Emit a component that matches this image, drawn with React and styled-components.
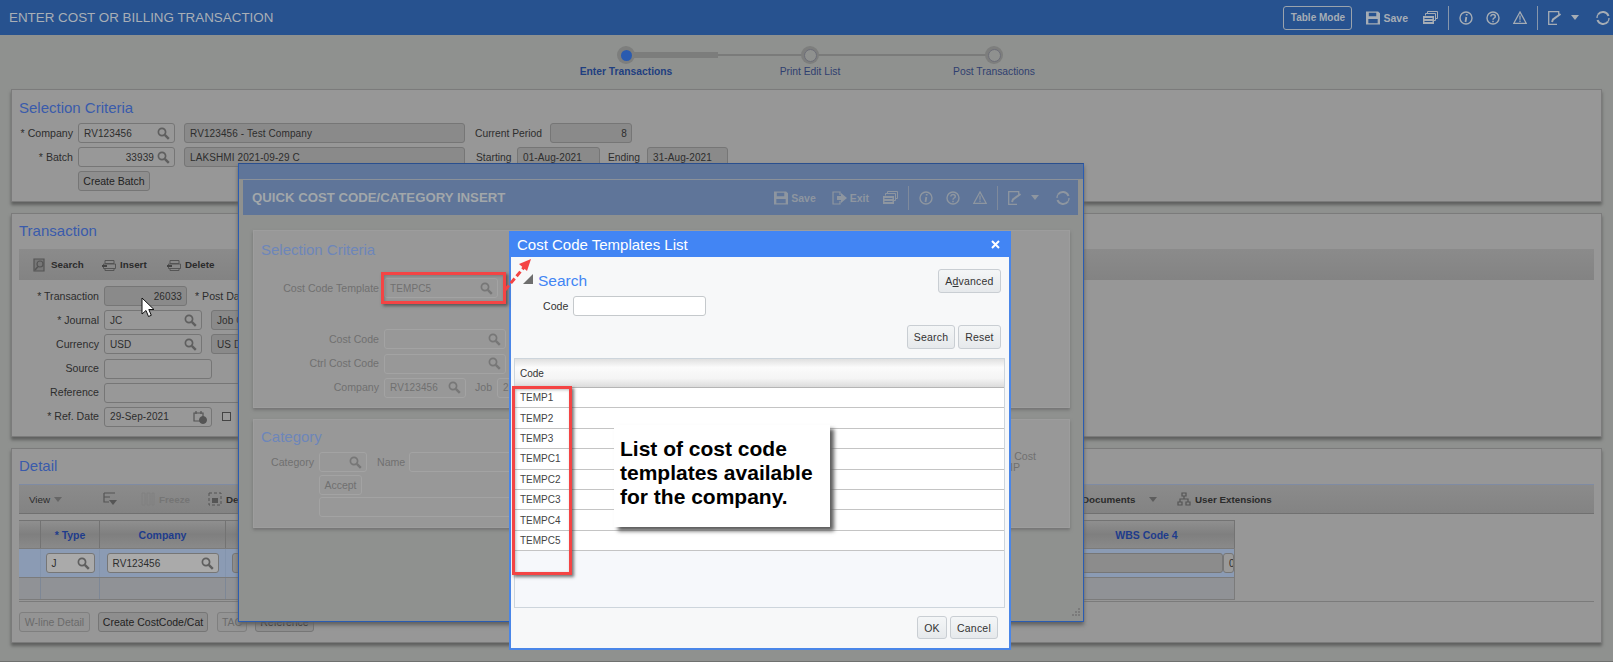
import styled, { createGlobalStyle } from 'styled-components';

const GlobalStyle = createGlobalStyle`
  html, body {
    margin: 0;
    padding: 0;
    background: #8f918f;
    font-family: "Liberation Sans", Arial, sans-serif;
  }
  * { box-sizing: border-box; }
`;

/* icons */
const SearchIcon = ({ color = '#666', size = 13 }) => (
  <svg width={size} height={size} viewBox="0 0 13 13" fill="none" stroke={color}>
    <circle cx="5" cy="5" r="3.6" strokeWidth="1.7" />
    <path d="M7.8 7.8l4 4" strokeWidth="2.4" />
  </svg>
);
const FloppyIcon = ({ color }) => (
  <svg width="14" height="14" viewBox="0 0 15 14" fill={color}>
    <path d="M0 0h13l2 2v12H0z M3 1.5v3.5h8V1.5z M2.5 8v4.5h10V8z" fillRule="evenodd" />
  </svg>
);
const CopyIcon = ({ color }) => (
  <svg width="15" height="13" viewBox="0 0 15 13" fill="none" stroke={color}>
    <path d="M4.500 2.500V.5h10v7h-2" strokeWidth="1" />
    <path d="M2.500 4.500V2.500h10v7h-2" strokeWidth="1" />
    <path d="M0 5h11v8H0z M1.500 7v1h8V7z M1.500 10v1h8v-1z" fill={color} stroke="none" fillRule="evenodd" />
  </svg>
);
const InfoIcon = ({ color }) => (
  <svg width="14" height="14" viewBox="0 0 14 14" fill="none" stroke={color}>
    <circle cx="7" cy="7" r="6" strokeWidth="1.4" />
    <path d="M7.700 3v1.500M7.300 6L6.500 11" strokeWidth="1.800" />
  </svg>
);
const HelpIcon = ({ color }) => (
  <svg width="14" height="14" viewBox="0 0 14 14" fill="none" stroke={color}>
    <circle cx="7" cy="7" r="6" strokeWidth="1.4" />
    <path d="M4.800 5.500C4.800 2.800 9.300 3 9.300 5.400 9.300 7 7 7 7 8.700M7 9.700v1.500" strokeWidth="1.500" />
  </svg>
);
const WarnIcon = ({ color }) => (
  <svg width="14" height="13" viewBox="0 0 14 13" fill="none" stroke={color}>
    <path d="M7 1L.8 12.300h12.400z" strokeWidth="1.300" />
    <path d="M7 4.500v4.300M7 9.500v1.500" strokeWidth="1.200" />
  </svg>
);
const NoteIcon = ({ color }) => (
  <svg width="14" height="14" viewBox="0 0 14 14" fill="none" stroke={color}>
    <path d="M9 13.300H.7V.7h10v3" strokeWidth="1.300" />
    <path d="M4 11l1-2.500L12.500 3" strokeWidth="2" />
  </svg>
);
const RefreshIcon = ({ color }) => (
  <svg width="14" height="14" viewBox="0 0 14 14" fill="none" stroke={color}>
    <path d="M12.500 5A6 6 0 0 0 2 3.500M1.500 9A6 6 0 0 0 12 10.500" strokeWidth="2" />
    <path d="M1 7a6 6 0 0 1 1-3.500M13 7a6 6 0 0 1-1 3.500" strokeWidth="1.300" />
  </svg>
);
const ExitIcon = ({ color }) => (
  <svg width="15" height="14" viewBox="0 0 15 14" fill="none" stroke={color}>
    <path d="M8 4V1H1v12h7v-3" strokeWidth="1.200" />
    <path d="M5 5h4V2l6 5-6 5V9H5z" fill={color} stroke="none" />
  </svg>
);
const ToolGlyph = ({ kind }) => (
  <svg width="14" height="14" viewBox="0 0 14 14" fill="none" stroke="#555">
    {kind === 'search' && (
      <>
        <path d="M1 1h10v12H1z" strokeWidth="1.200" fill="#777" />
        <circle cx="7" cy="6" r="3" strokeWidth="1.200" />
        <path d="M5 8.500L2 12" strokeWidth="1.500" />
      </>
    )}
    {kind === 'row' && (
      <>
        <path d="M3 2.500h9v3H3zM1.500 6h12v4.500h-12zM3 10.500h9v2H3z" strokeWidth="1" fill="#888" />
        <path d="M0 8h5" strokeWidth="2" stroke="#444" />
      </>
    )}
    {kind === 'filter' && (
      <>
        <path d="M1 1h11M1 1v9h5M1 5h6" strokeWidth="1.200" />
        <path d="M6 8h8l-4 5z" fill="#555" stroke="none" />
      </>
    )}
    {kind === 'freeze' && <path d="M1 1h3v12H1zM6 1h3v12H6zM11 1h2v12h-2z" stroke="#808080" />}
    {kind === 'density' && (
      <>
        <path d="M1 1h12v12H1z" strokeWidth="1" strokeDasharray="3 2" />
        <path d="M4 6h6v5H4z" fill="#555" stroke="none" />
      </>
    )}
    {kind === 'tree' && (
      <path d="M5 1h4v3H5zM1 10h4v3H1zM9 10h4v3H9zM7 4v3M3 10V7h8v3" strokeWidth="1.200" />
    )}
  </svg>
);

/* page */
const Page = styled.div`
  position: relative;
  width: 1613px;
  height: 662px;
  overflow: hidden;
  background: #8f918f;
  color: #2d2d2d;
  font-size: 11px;
  border-bottom: 1px solid #6f716f;
`;

const TopBar = styled.header`
  height: 35px;
  background: #27528f;
  display: flex;
  align-items: center;
  padding: 0 3px 0 9px;
  color: #a6adb5;
`;

const AppTitle = styled.h1`
  margin: 0 auto 0 0;
  font-size: 13.4px;
  font-weight: 400;
  color: #a9afb6;
`;

const TableMode = styled.button`
  width: 69px;
  height: 24px;
  margin-right: 14px;
  padding: 0;
  background: transparent;
  border: 1px solid #9aa3ad;
  border-radius: 3px;
  color: #a6adb5;
  font: 700 10px "Liberation Sans", Arial, sans-serif;
`;

const BarAction = styled.span`
  display: inline-flex;
  align-items: center;
  gap: 3px;
  margin-right: ${(p) => p.$mr ?? 14}px;
  margin-left: ${(p) => p.$ml ?? 0}px;
  font-size: 10.5px;
  font-weight: 700;
  color: ${(p) => p.$color};
`;

const BarDivider = styled.i`
  width: 1px;
  height: 24px;
  margin: 0 10px;
  background: ${(p) => p.$color};
`;

const Caret = styled.i`
  display: inline-block;
  width: 0;
  height: 0;
  border-left: 4px solid transparent;
  border-right: 4px solid transparent;
  border-top: 5px solid ${(p) => p.$color};
`;

const Stepper = styled.nav`
  height: 54px;
  display: flex;
  padding: 11px 0 0 534px;
`;

const Step = styled.div`
  position: relative;
  width: 184px;
  display: flex;
  flex-direction: column;
  align-items: center;
  gap: 2px;
  &::before {
    content: '';
    display: ${(p) => (p.$last ? 'none' : 'block')};
    position: absolute;
    left: 50%;
    top: 8px;
    width: 100%;
    height: 2px;
    background: #7a7b7a;
  }
  &::after {
    content: '';
    display: ${(p) => (p.$active ? 'block' : 'none')};
    position: absolute;
    left: 50%;
    top: 6px;
    width: 50%;
    height: 6px;
    background: #7c7d7c;
  }
`;

const StepDot = styled.span`
  position: relative;
  z-index: 1;
  width: 18px;
  height: 18px;
  border-radius: 50%;
  background: #7d7e7d;
  display: flex;
  align-items: center;
  justify-content: center;
  &::after {
    content: '';
    width: 11px;
    height: 11px;
    border-radius: 50%;
    background: ${(p) => (p.$active ? '#2a5bb0' : '#8f918f')};
    border: ${(p) => (p.$active ? 'none' : '1px solid #6d6e78')};
  }
`;

const StepLabel = styled.span`
  font-size: 10.3px;
  font-weight: ${(p) => (p.$active ? 700 : 400)};
  color: ${(p) => (p.$active ? '#1f3f80' : '#2f3f70')};
`;

const Panel = styled.section`
  margin: 0 11px 11px;
  height: ${(p) => p.$h}px;
  padding: ${(p) => p.$pt ?? 8}px 7px 0;
  background: #979797;
  border: 1px solid #7b7b7b;
  box-shadow: 0 3px 3px #5f605f;
  display: flex;
  flex-direction: column;
`;

const PanelTitle = styled.h2`
  margin: 0 0 ${(p) => p.$mb ?? 5}px 0;
  font-size: 15px;
  line-height: 20px;
  font-weight: 400;
  color: ${(p) => p.$color ?? '#3a5bab'};
`;

const Rows = styled.div`
  display: flex;
  flex-direction: column;
  gap: ${(p) => p.$gap ?? 4.2}px;
`;

const Row = styled.div`
  height: ${(p) => p.$h ?? 20}px;
  display: flex;
  align-items: center;
`;

const Label = styled.label`
  width: ${(p) => p.$w + 1}px;
  margin-left: ${(p) => p.$ml ?? 0}px;
  margin-right: 5px;
  text-align: ${(p) => (p.$left ? 'left' : 'right')};
  flex: none;
  white-space: nowrap;
  font-size: ${(p) => p.$fs ?? 10.6}px;
  line-height: 11px;
  color: ${(p) => p.$color ?? '#2d2d2d'};
`;

const Field = styled.div`
  width: ${(p) => p.$w}px;
  height: ${(p) => p.$h ?? 20}px;
  margin-left: ${(p) => p.$ml ?? 0}px;
  flex: none;
  display: flex;
  align-items: center;
  justify-content: ${(p) => (p.$right ? 'flex-end' : 'space-between')};
  gap: 3px;
  padding: 0 4px 0 5px;
  border: 1px solid ${(p) => p.$line ?? '#767676'};
  border-radius: 3px;
  overflow: hidden;
  white-space: nowrap;
  font-size: 10px;
  letter-spacing: 0.1px;
  color: ${(p) => p.$color ?? '#2d2d2d'};
  background: ${(p) => p.$bg ?? '#989898'};
`;

const Button = styled.button`
  height: ${(p) => p.$h ?? 20}px;
  width: ${(p) => p.$w}px;
  margin-left: ${(p) => p.$ml ?? 0}px;
  flex: none;
  padding: 0;
  border: 1px solid ${(p) => p.$line ?? '#767676'};
  border-radius: 3px;
  background: ${(p) => p.$bg ?? '#8e8e8e'};
  color: ${(p) => p.$color ?? '#222'};
  font: 10.5px "Liberation Sans", Arial, sans-serif;
`;

const Toolbar = styled.div`
  height: ${(p) => p.$h ?? 31}px;
  margin: 0 0 6px;
  padding-left: ${(p) => p.$pl ?? 14}px;
  display: flex;
  align-items: center;
  flex: none;
  background: linear-gradient(#8b8b8b, #838383);
  border-top: ${(p) => (p.$edge ? '1px solid #7f8ba3' : 'none')};
  border-bottom: ${(p) => (p.$edge ? '1px solid #707070' : 'none')};
`;

const Tool = styled.span`
  width: ${(p) => p.$w}px;
  margin-left: ${(p) => p.$ml ?? 0}px;
  flex: none;
  display: inline-flex;
  align-items: center;
  gap: 4px;
  white-space: nowrap;
  font-size: 9.8px;
  font-weight: ${(p) => (p.$plain ? 400 : 700)};
  color: ${(p) => (p.$muted ? '#757575' : '#2b2b2b')};
`;

const Checkbox = styled.span`
  width: 9px;
  height: 9px;
  margin-left: 10px;
  border: 1px solid #444;
  background: #9a9a9a;
`;

/* detail grid */
const GridRow = styled.div`
  width: 1216px;
  height: ${(p) => p.$h}px;
  display: grid;
  grid-template-columns: 22px 59px 126px 833px 176px;
  background: ${(p) => p.$bg ?? 'transparent'};
  border-bottom: 1px solid #7b7b7b;
`;

const HeadCell = styled.div`
  display: flex;
  align-items: center;
  justify-content: center;
  border-right: 1px solid #737373;
  border-top: 1px solid #737373;
  background: linear-gradient(#8f8f8f, #7f7f7f 50%, #8a8a8a);
  font-size: 10.5px;
  font-weight: 700;
  color: #1e3c8c;
`;

const Cell = styled.div`
  display: flex;
  align-items: center;
  justify-content: ${(p) => (p.$end ? 'flex-end' : 'center')};
  overflow: hidden;
  border-right: 1px solid ${(p) => p.$line ?? '#8394ad'};
`;

const DetailActions = styled.div`
  display: flex;
  align-items: center;
  margin-top: 1px;
  padding-top: 10px;
  border-top: 1px solid #7b7b7b;
`;

/* floating windows */
const QuickModal = styled.div`
  position: absolute;
  left: 238px;
  top: 163px;
  width: 846px;
  height: 459px;
  padding-top: 15px;
  background: #8f918f;
  border: 1px solid #2a5cb2;
  border-top-color: #2a4f8e;
  box-shadow: 0 3px 4px #606060;
  display: flex;
  flex-direction: column;
  background-image: linear-gradient(#5f7599 15px, transparent 15px);
`;

const QuickHeader = styled.div`
  height: 36px;
  margin: 0 5px 0 4px;
  padding: 0 8px 0 9px;
  display: flex;
  align-items: center;
  flex: none;
  background: #5f7599;
  border-top: 1px solid #8b9199;
  color: #8e96a0;
`;

const QuickTitle = styled.h3`
  margin: 0 auto 0 0;
  font-size: 13.2px;
  font-weight: 700;
  color: #a2a7aa;
`;

const QuickPanel = styled.section`
  margin: ${(p) => p.$mt}px 13px 0 14px;
  height: ${(p) => p.$h}px;
  padding: ${(p) => p.$pt ?? 9}px 7px 0;
  background: #989898;
  border: 1px solid #9d9d9d;
  box-shadow: 0 2px 3px #737373;
  flex: none;
`;

const Grip = styled.svg`
  position: absolute;
  right: 3px;
  bottom: 3px;
`;

const ListModal = styled.div`
  position: absolute;
  left: 509px;
  top: 231px;
  width: 502px;
  height: 419px;
  background: #f7f8f9;
  border: 1px solid #4a86e8;
  border-width: 0 2px 2px;
  display: flex;
  flex-direction: column;
`;

const ListHeader = styled.div`
  height: 26px;
  margin: 0 -2px;
  padding: 0 11px 0 8px;
  flex: none;
  display: flex;
  align-items: center;
  justify-content: space-between;
  background: #4285f4;
  color: #fff;
  font-size: 15px;
`;

const SearchBar = styled.div`
  height: 39px;
  padding: 12px 8px 0 12px;
  display: flex;
  align-items: flex-start;
  flex: none;
`;

const Triangle = styled.i`
  width: 0;
  height: 0;
  margin: 5px 5px 0 0;
  border-bottom: 10px solid #6e6e6e;
  border-left: 10px solid transparent;
`;

const SearchTitle = styled.span`
  margin: 0 auto 0 0;
  font-size: 15.5px;
  line-height: 23px;
  color: #4285f4;
`;

const LightButton = styled.button`
  width: ${(p) => p.$w}px;
  height: ${(p) => p.$h ?? 24}px;
  padding: 0;
  flex: none;
  background: linear-gradient(#f4f6f7, #e6e9ec);
  border: 1px solid #c9ced3;
  border-radius: 3px;
  color: #333;
  font: 10.5px "Liberation Sans", Arial, sans-serif;
  letter-spacing: 0.2px;
  u { text-decoration: underline; }
`;

const CodeRow = styled.div`
  height: 20px;
  padding-left: 32px;
  display: flex;
  align-items: center;
  gap: 5px;
  color: #333;
  font-size: 10.6px;
  flex: none;
`;

const CodeInput = styled.input`
  width: 133px;
  height: 20px;
  background: #fff;
  border: 1px solid #c5c9cc;
  border-radius: 3px;
`;

const ListActions = styled.div`
  margin-top: ${(p) => p.$mt}px;
  padding-right: ${(p) => p.$pr}px;
  display: flex;
  justify-content: flex-end;
  gap: 3px;
  flex: none;
`;

const ListTable = styled.div`
  margin: 9px 4px 0 3px;
  height: 250px;
  background: #f6f8fb;
  border: 1px solid #cdd5dc;
  flex: none;
`;

const ListHead = styled.div`
  height: 29px;
  padding-left: 5px;
  display: flex;
  align-items: center;
  background: linear-gradient(#e0e0e0, #fbfbfb 30%, #f4f4f4 70%, #dcdcdc);
  border-bottom: 1px solid #b5b5b5;
  font-size: 10px;
  color: #333;
`;

const ListRow = styled.div`
  height: 20.400px;
  padding-left: 5px;
  display: flex;
  align-items: center;
  background: #fff;
  border-bottom: 1px solid #c4c4c4;
  font-size: 10px;
  color: #444;
`;

const Callout = styled.div`
  position: absolute;
  left: 614px;
  top: 425px;
  width: 216px;
  height: 102px;
  padding: 12px 0 0 6px;
  background: #fff;
  box-shadow: 4px 4px 4px #5d5d5d;
  font-size: 21px;
  font-weight: 700;
  line-height: 24px;
  white-space: nowrap;
  color: #000;
`;

const RedBox = styled.div`
  position: absolute;
  left: ${(p) => p.$x}px;
  top: ${(p) => p.$y}px;
  width: ${(p) => p.$w}px;
  height: ${(p) => p.$h}px;
  border: 3px solid #f44444;
  box-shadow: 2px 2px 3px rgba(60, 60, 60, 0.7), inset 1px 1px 3px rgba(60, 60, 60, 0.35);
`;

const Overlay = styled.svg`
  position: absolute;
  left: ${(p) => p.$x}px;
  top: ${(p) => p.$y}px;
`;

const Mag = () => <SearchIcon color="#5f5f5f" />;
const FadedMag = () => <SearchIcon color="#777" />;
const LIGHT_TEXT = '#707070';
const FADED_LINE = '#a3a3a3';

const BarIcons = ({ color, line }) => (
  <>
    <BarDivider $color={line} />
    <BarAction $color={color} $mr={13}><InfoIcon color={color} /></BarAction>
    <BarAction $color={color} $mr={13}><HelpIcon color={color} /></BarAction>
    <BarAction $color={color} $mr={0}><WarnIcon color={color} /></BarAction>
    <BarDivider $color={line} />
    <BarAction $color={color} $mr={9}><NoteIcon color={color} /></BarAction>
    <Caret $color={color} />
    <BarAction $color={color} $mr={0} $ml={17}><RefreshIcon color={color} /></BarAction>
  </>
);

const TEMPLATES = ['TEMP1', 'TEMP2', 'TEMP3', 'TEMPC1', 'TEMPC2', 'TEMPC3', 'TEMPC4', 'TEMPC5'];

export default function App() {
  return (
    <Page>
      <GlobalStyle />
      <TopBar>
        <AppTitle>ENTER COST OR BILLING TRANSACTION</AppTitle>
        <TableMode>Table Mode</TableMode>
        <BarAction $color="#a6adb5" $mr={15}><FloppyIcon color="#a6adb5" />Save</BarAction>
        <BarAction $color="#a6adb5" $mr={0}><CopyIcon color="#a6adb5" /></BarAction>
        <BarIcons color="#a6adb5" line="#8796ab" />
      </TopBar>

      <Stepper>
        <Step $active>
          <StepDot $active />
          <StepLabel $active>Enter Transactions</StepLabel>
        </Step>
        <Step>
          <StepDot />
          <StepLabel>Print Edit List</StepLabel>
        </Step>
        <Step $last>
          <StepDot />
          <StepLabel>Post Transactions</StepLabel>
        </Step>
      </Stepper>

      <Panel $h={113}>
        <PanelTitle>Selection Criteria</PanelTitle>
        <Rows>
          <Row>
            <Label $w={53}>* Company</Label>
            <Field $w={97}>RV123456<Mag /></Field>
            <Field $w={281} $ml={9} $bg="#8a8a8a">RV123456 - Test Company</Field>
            <Label $w={69} $ml={10} $left $fs={10.3}>Current Period</Label>
            <Field $w={82} $right $bg="#8a8a8a">8</Field>
          </Row>
          <Row>
            <Label $w={53}>* Batch</Label>
            <Field $w={97} $right>33939<Mag /></Field>
            <Field $w={281} $ml={9} $bg="#8a8a8a">LAKSHMI 2021-09-29 C</Field>
            <Label $w={35} $ml={11} $left $fs={10.3}>Starting</Label>
            <Field $w={83} $bg="#8a8a8a">01-Aug-2021</Field>
            <Label $w={33} $ml={8} $left $fs={10.3}>Ending</Label>
            <Field $w={81} $bg="#8a8a8a">31-Aug-2021</Field>
          </Row>
          <Row>
            <Button $w={72} $ml={59}>Create Batch</Button>
          </Row>
        </Rows>
      </Panel>

      <Panel $h={224} $pt={7}>
        <PanelTitle $mb={8}>Transaction</PanelTitle>
        <Toolbar>
          <Tool $w={69}><ToolGlyph kind="search" />Search</Tool>
          <Tool $w={65}><ToolGlyph kind="row" />Insert</Tool>
          <Tool $w={60}><ToolGlyph kind="row" />Delete</Tool>
        </Toolbar>
        <Rows>
          <Row>
            <Label $w={79}>* Transaction</Label>
            <Field $w={83} $right $bg="#8a8a8a">26033</Field>
            <Label $w={60} $ml={8} $left>* Post Date</Label>
          </Row>
          <Row>
            <Label $w={79}>* Journal</Label>
            <Field $w={98}>JC<Mag /></Field>
            <Field $w={90} $ml={9} $bg="#8a8a8a">Job Cost</Field>
          </Row>
          <Row>
            <Label $w={79}>Currency</Label>
            <Field $w={98}>USD<Mag /></Field>
            <Field $w={90} $ml={9} $bg="#8a8a8a">US Dollar</Field>
          </Row>
          <Row>
            <Label $w={79}>Source</Label>
            <Field $w={108} />
          </Row>
          <Row>
            <Label $w={79}>Reference</Label>
            <Field $w={200} />
          </Row>
          <Row>
            <Label $w={79}>* Ref. Date</Label>
            <Field $w={108}>
              29-Sep-2021
              <svg width="14" height="14" viewBox="0 0 14 14" fill="none" stroke="#555">
                <path d="M1 3h9v8H1zM3 1v3M8 1v3" strokeWidth="1.200" />
                <circle cx="10" cy="10" r="3.500" fill="#555" />
              </svg>
            </Field>
            <Checkbox />
          </Row>
        </Rows>
      </Panel>

      <Panel $h={195} $pt={7}>
        <PanelTitle $mb={8}>Detail</PanelTitle>
        <Toolbar $pl={10} $edge $h={30}>
          <Tool $w={74} $plain>View <Caret $color="#666" /></Tool>
          <Tool $w={38}><ToolGlyph kind="filter" /></Tool>
          <Tool $w={67} $muted><ToolGlyph kind="freeze" />Freeze</Tool>
          <Tool $w={60}><ToolGlyph kind="density" />Density</Tool>
          <Tool $w={67} $ml={814}>Documents</Tool>
          <Tool $w={28}><Caret $color="#5d5d5d" /></Tool>
          <Tool $w={100}><ToolGlyph kind="tree" />User Extensions</Tool>
        </Toolbar>
        <GridRow $h={29}>
          <HeadCell />
          <HeadCell>* Type</HeadCell>
          <HeadCell>Company</HeadCell>
          <HeadCell>Job</HeadCell>
          <HeadCell>WBS Code 4</HeadCell>
        </GridRow>
        <GridRow $h={29} $bg="#8b9bb4">
          <Cell />
          <Cell><Field $w={49} $bg="#aaaaaa">J<Mag /></Field></Cell>
          <Cell><Field $w={112} $bg="#aaaaaa">RV123456<Mag /></Field></Cell>
          <Cell $end><Field $w={826} $bg="#8e8e8e">2</Field></Cell>
          <Cell $end $line="#7b7b7b">
            <Field $w={170} $bg="#8c8c8c" />
            <Field $w={6} $bg="#9a9a9a">0</Field>
          </Cell>
        </GridRow>
        <GridRow $h={22} $bg="#909296">
          <Cell $line="#7d8796" />
          <Cell $line="#7d8796" />
          <Cell $line="#7d8796" />
          <Cell $line="#7d8796" />
          <Cell $line="#7b7b7b" />
        </GridRow>
        <DetailActions>
          <Button $w={71} $bg="#949494" $color="#6b6b6b" $line="#7f7f7f">W-line Detail</Button>
          <Button $w={110} $ml={8}>Create CostCode/Cat</Button>
          <Button $w={30} $ml={9} $bg="#949494" $color="#6b6b6b" $line="#7f7f7f">TAC</Button>
          <Button $w={59} $ml={8}>Reference</Button>
        </DetailActions>
      </Panel>

      <QuickModal>
        <QuickHeader>
          <QuickTitle>QUICK COST CODE/CATEGORY INSERT</QuickTitle>
          <BarAction $color="#8e96a0" $mr={16}><FloppyIcon color="#8e96a0" />Save</BarAction>
          <BarAction $color="#8e96a0" $mr={14}><ExitIcon color="#8e96a0" />Exit</BarAction>
          <BarAction $color="#8e96a0" $mr={0}><CopyIcon color="#8e96a0" /></BarAction>
          <BarIcons color="#8e96a0" line="#7f8a9c" />
        </QuickHeader>

        <QuickPanel $mt={15} $h={178}>
          <PanelTitle $mb={18} $color="#6d86ba">Selection Criteria</PanelTitle>
          <Rows>
            <Row>
              <Label $w={117} $color={LIGHT_TEXT}>Cost Code Template</Label>
              <Field $w={114} $color={LIGHT_TEXT} $line={FADED_LINE}>TEMPC5<FadedMag /></Field>
            </Row>
            <Row $h={23} />
            <Row>
              <Label $w={117} $color={LIGHT_TEXT}>Cost Code</Label>
              <Field $w={122} $line={FADED_LINE}><span /><FadedMag /></Field>
            </Row>
            <Row>
              <Label $w={117} $color={LIGHT_TEXT}>Ctrl Cost Code</Label>
              <Field $w={122} $line={FADED_LINE}><span /><FadedMag /></Field>
            </Row>
            <Row>
              <Label $w={117} $color={LIGHT_TEXT}>Company</Label>
              <Field $w={82} $color={LIGHT_TEXT} $line={FADED_LINE}>RV123456<FadedMag /></Field>
              <Label $w={16} $ml={9} $color={LIGHT_TEXT}>Job</Label>
              <Field $w={30} $color={LIGHT_TEXT} $line={FADED_LINE}>2</Field>
            </Row>
          </Rows>
        </QuickPanel>

        <QuickPanel $mt={11} $h={109} $pt={7}>
          <PanelTitle $mb={5} $color="#6d86ba">Category</PanelTitle>
          <Rows $gap={2.500}>
            <Row>
              <Label $w={52} $color={LIGHT_TEXT}>Category</Label>
              <Field $w={48} $line={FADED_LINE}><span /><FadedMag /></Field>
              <Label $w={26} $ml={10} $color={LIGHT_TEXT}>Name</Label>
              <Field $w={300} $line={FADED_LINE} />
              <Label $w={50} $ml={291} $left $color={LIGHT_TEXT}>To Cost<br />WIP</Label>
            </Row>
            <Row>
              <Button $w={43} $ml={58} $bg="#989898" $color={LIGHT_TEXT} $line={FADED_LINE}>Accept</Button>
            </Row>
            <Row>
              <Field $w={400} $ml={58} $line={FADED_LINE} />
            </Row>
          </Rows>
        </QuickPanel>

        <Grip width="10" height="10" viewBox="0 0 10 10" fill="#7a7a7a">
          <path d="M8 0h2v2H8zM5 3h2v2H5zM8 3h2v2H8zM2 6h2v2H2zM5 6h2v2H5zM8 6h2v2H8z" />
        </Grip>
      </QuickModal>

      <ListModal>
        <ListHeader>
          Cost Code Templates List
          <svg width="9" height="9" viewBox="0 0 9 9" stroke="#fff" strokeWidth="2">
            <path d="M1 1l7 7M8 1L1 8" />
          </svg>
        </ListHeader>
        <SearchBar>
          <Triangle />
          <SearchTitle>Search</SearchTitle>
          <LightButton $w={63}>A<u>d</u>vanced</LightButton>
        </SearchBar>
        <CodeRow>
          Code
          <CodeInput aria-label="Code" />
        </CodeRow>
        <ListActions $mt={9} $pr={8}>
          <LightButton $w={48}>Search</LightButton>
          <LightButton $w={43}>Reset</LightButton>
        </ListActions>
        <ListTable>
          <ListHead>Code</ListHead>
          {TEMPLATES.map((code) => (
            <ListRow key={code}>{code}</ListRow>
          ))}
        </ListTable>
        <ListActions $mt={8} $pr={11}>
          <LightButton $w={30} $h={23}>OK</LightButton>
          <LightButton $w={48} $h={23}>Cancel</LightButton>
        </ListActions>
      </ListModal>

      <Callout>
        List of cost code<br />templates available<br />for the company.
      </Callout>

      <RedBox $x={381} $y={272} $w={125} $h={32} />
      <RedBox $x={512} $y={386} $w={60} $h={189} />

      <Overlay $x={500} $y={255} width="36" height="40" viewBox="0 0 36 40">
        <path d="M5 35L26 10" stroke="#f44444" strokeWidth="3" strokeDasharray="6 3" fill="none" />
        <path d="M31 4L19 9l8 7z" fill="#f44444" />
      </Overlay>

      <Overlay $x={140} $y={297} width="16" height="22" viewBox="0 0 16 22">
        <path d="M2 1v16l4-3.500 2.500 6 2.800-1.200-2.500-5.800H14z" fill="#fff" stroke="#111" strokeWidth="1" />
      </Overlay>
    </Page>
  );
}
